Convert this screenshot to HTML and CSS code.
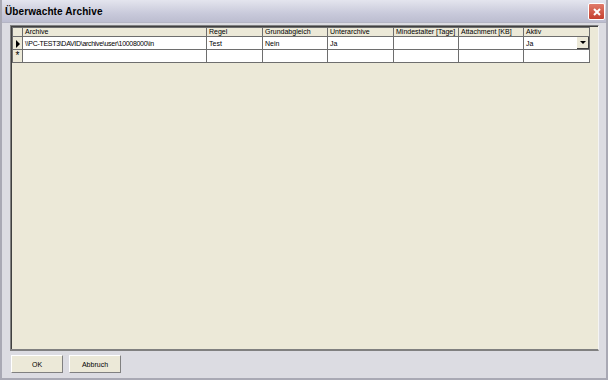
FILE: index.html
```html
<!DOCTYPE html>
<html lang="de">
<head>
  <meta charset="UTF-8">
  <title>Überwachte Archive</title>
  <link rel="stylesheet" href="styles.css">
</head>
<body>

<div class="window">
  <div class="titlebar">
    <span class="title">Überwachte Archive</span>
    <span class="close-btn">
      <svg width="10" height="10" viewBox="0 0 10 10"><path d="M2 2 L8 8 M8 2 L2 8" stroke="white" stroke-width="2"/></svg>
    </span>
  </div>

  <div class="client">
    <div class="grid">
      <table>
        <thead>
          <tr>
            <th class="rowhead"></th>
            <th class="c-archive">Archive</th>
            <th class="c-regel">Regel</th>
            <th class="c-grund">Grundabgleich</th>
            <th class="c-unter">Unterarchive</th>
            <th class="c-mind">Mindestalter [Tage]</th>
            <th class="c-att">Attachment [KB]</th>
            <th class="c-aktiv">Aktiv</th>
          </tr>
        </thead>
        <tbody>
          <tr>
            <td class="rowhead"><span class="arrow"></span></td>
            <td class="path">\\PC-TEST3\DAVID\archive\user\10008000\in</td>
            <td>Test</td>
            <td>Nein</td>
            <td>Ja</td>
            <td></td>
            <td></td>
            <td class="combo">Ja<span class="drop"><span class="drop-arrow"></span></span></td>
          </tr>
          <tr>
            <td class="rowhead star">*</td>
            <td></td>
            <td></td>
            <td></td>
            <td></td>
            <td></td>
            <td></td>
            <td></td>
          </tr>
        </tbody>
      </table>
    </div>

    <div class="buttons">
      <button type="button">OK</button>
      <button type="button">Abbruch</button>
    </div>
  </div>
</div>

</body>
</html>
```

FILE: styles.css
```css
body {
  margin: 0;
  width: 611px;
  height: 383px;
  background-color: #ffffff;
  font-family: "Liberation Sans", Arial, sans-serif;
  overflow: hidden;
}

.window {
  box-sizing: border-box;
  width: 608px;
  height: 380px;
  display: flex;
  flex-direction: column;
  background-color: #dcdce2;
  border: 2px solid #a9a9b4;
  border-top: none;
}

.titlebar {
  height: 22px;
  display: flex;
  align-items: center;
  justify-content: space-between;
  padding: 0 1px 0 3px;
  background: linear-gradient(#e4e5ee, #c9cadb 60%, #bcbdd0);
  border-bottom: 1px solid #b4b5c4;
}

.title {
  font-size: 10px;
  font-weight: bold;
  color: #000000;
  letter-spacing: 0.1px;
}

.close-btn {
  width: 15px;
  height: 15px;
  display: flex;
  align-items: center;
  justify-content: center;
  background: linear-gradient(#e07a6a, #c5402f);
  border: 1px solid #ffffff;
  border-radius: 2px;
  margin-top: 1px;
}

.client {
  flex: 1;
  display: flex;
  flex-direction: column;
  padding: 2px 7px 5px 8px;
}

.grid {
  flex: 1;
  background-color: #ece9d8;
  border-top: 1px solid #808080;
  border-left: 1px solid #808080;
  border-right: 1px solid #f4f4f4;
  border-bottom: 2px solid #808080;
  box-shadow: inset 1px 1px 0 #404040;
  padding: 1px 0 0 1px;
}

table {
  border-collapse: collapse;
  font-size: 7px;
  color: #000000;
  table-layout: fixed;
}

th, td {
  border: 1px solid #6e6e6e;
  padding: 0 2px;
  text-align: left;
  white-space: nowrap;
  overflow: hidden;
  font-weight: normal;
}

th {
  height: 7px;
  line-height: 8px;
  background-color: #ece9d8;
}

td {
  height: 12px;
  line-height: 11px;
  background-color: #ffffff;
}

.path {
  letter-spacing: -0.3px;
}

.rowhead {
  width: 9px;
  padding: 0;
  background-color: #ece9d8;
  text-align: center;
}

.c-archive { width: 179px; }
.c-regel { width: 51px; }
.c-grund { width: 60px; }
.c-unter { width: 61px; }
.c-mind { width: 60px; }
.c-att { width: 60px; }
.c-aktiv { width: 61px; }

.arrow {
  display: inline-block;
  width: 0;
  height: 0;
  border-top: 4px solid transparent;
  border-bottom: 4px solid transparent;
  border-left: 4px solid #000000;
  vertical-align: middle;
}

.star {
  font-size: 10px;
  line-height: 10px;
}

.combo {
  position: relative;
}

.drop {
  position: absolute;
  right: 0;
  top: 0;
  width: 11px;
  height: 11px;
  display: flex;
  align-items: center;
  justify-content: center;
  background-color: #ece9d8;
  border-right: 1px solid #404040;
  border-bottom: 1px solid #404040;
}

.drop-arrow {
  width: 0;
  height: 0;
  border-left: 3px solid transparent;
  border-right: 3px solid transparent;
  border-top: 3px solid #000000;
}

.buttons {
  display: flex;
  gap: 6px;
  padding-top: 4px;
  padding-left: 1px;
}

button {
  width: 52px;
  height: 18px;
  font-family: "Liberation Sans", Arial, sans-serif;
  font-size: 7px;
  color: #000000;
  background-color: #ece9d8;
  border: 1px solid #ffffff;
  border-right-color: #808080;
  border-bottom-color: #808080;
  padding: 0;
}
```
